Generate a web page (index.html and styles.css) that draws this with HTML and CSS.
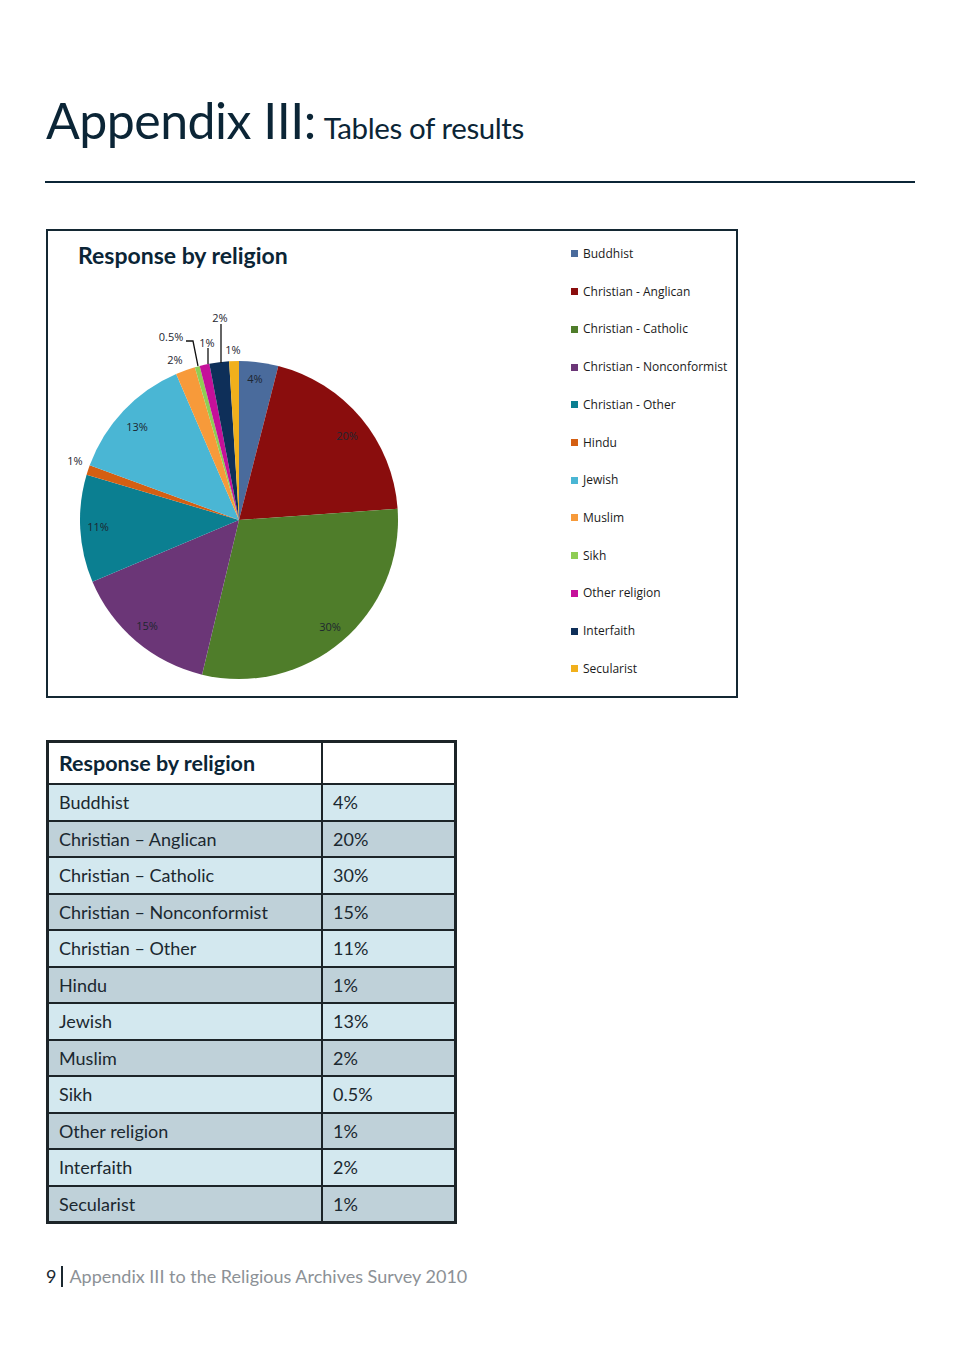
FILE: index.html
```html
<!DOCTYPE html>
<html lang="en">
<head>
<meta charset="utf-8">
<title>Appendix III: Tables of results</title>
<link rel="stylesheet" href="styles.css">
</head>
<body>
<div class="page">
  <header class="page-header">
    <h1 class="title"><span class="title-main">Appendix III:</span> <span class="title-sub">Tables of results</span></h1>
  </header>

  <section class="chart">
    <div class="chart-left">
      <h2 class="chart-title">Response by religion</h2>
      <svg class="pie" width="475" height="426" viewBox="0 0 475 426" xmlns="http://www.w3.org/2000/svg">
        <g class="slices">
          <path fill="#4a6b9c" d="M191 251 L191 92 A159 159 0 0 1 230.35 96.94 Z"/>
          <path fill="#8a0d0d" d="M191 251 L230.35 96.94 A159 159 0 0 1 349.61 239.83 Z"/>
          <path fill="#4f7d2a" d="M191 251 L349.61 239.83 A159 159 0 0 1 154.06 405.65 Z"/>
          <path fill="#6b3677" d="M191 251 L154.06 405.65 A159 159 0 0 1 44.46 312.71 Z"/>
          <path fill="#0b7f91" d="M191 251 L44.46 312.71 A159 159 0 0 1 38.60 205.66 Z"/>
          <path fill="#d45f12" d="M191 251 L38.60 205.66 A159 159 0 0 1 41.73 196.23 Z"/>
          <path fill="#4ab6d4" d="M191 251 L41.73 196.23 A159 159 0 0 1 128.15 104.95 Z"/>
          <path fill="#f79a3a" d="M191 251 L128.15 104.95 A159 159 0 0 1 146.86 98.25 Z"/>
          <path fill="#8fcd54" d="M191 251 L146.86 98.25 A159 159 0 0 1 151.65 96.95 Z"/>
          <path fill="#c5109a" d="M191 251 L151.65 96.95 A159 159 0 0 1 161.35 94.79 Z"/>
          <path fill="#0e2f59" d="M191 251 L161.35 94.79 A159 159 0 0 1 181.07 92.31 Z"/>
          <path fill="#f1b01c" d="M191 251 L181.07 92.31 A159 159 0 0 1 191 92 Z"/>
        </g>
        <g class="leaders" fill="none" stroke="#111" stroke-width="1.3">
          <polyline points="138,72 145,72 150,97"/>
          <line x1="160" y1="79" x2="160" y2="95"/>
          <line x1="173" y1="55" x2="173" y2="94"/>
        </g>
        <g class="labels">
          <text x="207" y="114">4%</text>
          <text x="299" y="171">20%</text>
          <text x="282" y="362">30%</text>
          <text x="99" y="361">15%</text>
          <text x="50" y="262">11%</text>
          <text x="27" y="196">1%</text>
          <text x="89" y="162">13%</text>
          <text x="127" y="95">2%</text>
          <text x="123" y="72">0.5%</text>
          <text x="159" y="78">1%</text>
          <text x="172" y="53">2%</text>
          <text x="185" y="85">1%</text>
        </g>
      </svg>
    </div>
    <ul class="legend">
      <li><span class="swatch" style="background:#4a6b9c"></span>Buddhist</li>
      <li><span class="swatch" style="background:#8a0d0d"></span>Christian - Anglican</li>
      <li><span class="swatch" style="background:#4f7d2a"></span>Christian - Catholic</li>
      <li><span class="swatch" style="background:#6b3677"></span>Christian - Nonconformist</li>
      <li><span class="swatch" style="background:#0b7f91"></span>Christian - Other</li>
      <li><span class="swatch" style="background:#d45f12"></span>Hindu</li>
      <li><span class="swatch" style="background:#4ab6d4"></span>Jewish</li>
      <li><span class="swatch" style="background:#f79a3a"></span>Muslim</li>
      <li><span class="swatch" style="background:#8fcd54"></span>Sikh</li>
      <li><span class="swatch" style="background:#c5109a"></span>Other religion</li>
      <li><span class="swatch" style="background:#0e2f59"></span>Interfaith</li>
      <li><span class="swatch" style="background:#f1b01c"></span>Secularist</li>
    </ul>
  </section>

  <table class="results">
    <thead>
      <tr><th>Response by religion</th><th></th></tr>
    </thead>
    <tbody>
      <tr class="light"><td>Buddhist</td><td>4%</td></tr>
      <tr class="dark"><td>Christian – Anglican</td><td>20%</td></tr>
      <tr class="light"><td>Christian – Catholic</td><td>30%</td></tr>
      <tr class="dark"><td>Christian – Nonconformist</td><td>15%</td></tr>
      <tr class="light"><td>Christian – Other</td><td>11%</td></tr>
      <tr class="dark"><td>Hindu</td><td>1%</td></tr>
      <tr class="light"><td>Jewish</td><td>13%</td></tr>
      <tr class="dark"><td>Muslim</td><td>2%</td></tr>
      <tr class="light"><td>Sikh</td><td>0.5%</td></tr>
      <tr class="dark"><td>Other religion</td><td>1%</td></tr>
      <tr class="light"><td>Interfaith</td><td>2%</td></tr>
      <tr class="dark"><td>Secularist</td><td>1%</td></tr>
    </tbody>
  </table>

  <footer class="page-footer">
    <span class="page-num">9</span><span class="bar"></span><span class="footer-text">Appendix III to the Religious Archives Survey 2010</span>
  </footer>
</div>
</body>
</html>
```

FILE: styles.css
```css
html, body {
  margin: 0;
  padding: 0;
  background: #ffffff;
}

body {
  font-family: Lato, "Open Sans", "Liberation Sans", sans-serif;
  color: #1b2a33;
}

.page {
  width: 960px;
  padding-left: 45px;
  box-sizing: border-box;
}

.page-header {
  width: 870px;
  padding-top: 91px;
  padding-bottom: 24px;
  border-bottom: 2px solid #0b2536;
}

.title {
  margin: 0;
  font-weight: 400;
  font-size: 50px;
  line-height: 58px;
  color: #0b2536;
  white-space: nowrap;
}

.title-main {
  font-size: 50px;
  letter-spacing: -0.5px;
  margin-left: 1px;
}

.title-sub {
  font-size: 29.5px;
  letter-spacing: -0.4px;
  margin-left: -5px;
}

/* Chart */
.chart {
  margin-top: 46px;
  margin-left: 1px;
  width: 688px;
  height: 465px;
  border: 2px solid #142833;
  display: flex;
}

.chart-left {
  width: 523px;
  flex: none;
}

.chart-title {
  margin: 0;
  padding: 10px 0 0 30px;
  font-size: 23px;
  line-height: 28px;
  font-weight: 700;
  color: #0b2536;
}

.pie {
  display: block;
}

.pie .labels text {
  font-family: "Open Sans", "Liberation Sans", sans-serif;
  font-size: 11px;
  fill: #1d2630;
  text-anchor: middle;
}

.legend {
  list-style: none;
  margin: 0;
  padding: 4px 0 0 0;
  font-family: "Open Sans", "Liberation Sans", sans-serif;
  font-size: 12px;
  color: #1a1a1a;
}

.legend li {
  height: 37.73px;
  line-height: 37.73px;
  display: flex;
  align-items: center;
  white-space: nowrap;
}

.swatch {
  width: 7px;
  height: 7px;
  margin-right: 5px;
  flex: none;
}

/* Table */
.results {
  margin-top: 42px;
  margin-left: 1px;
  border-collapse: collapse;
  border: 3px solid #1c2428;
  width: 411px;
}

.results th,
.results td {
  border: 2.5px solid #1c2428;
  text-align: left;
  padding: 0 0 0 10px;
  vertical-align: middle;
  white-space: nowrap;
}

.results th {
  height: 40px;
  font-size: 21.5px;
  font-weight: 700;
  color: #0b2536;
  background: #ffffff;
}

.results th:first-child,
.results td:first-child {
  width: 262px;
}

.results td {
  height: 34.5px;
  font-size: 18px;
  color: #1b2830;
}

.results tr.light td {
  background: #d3e8ef;
}

.results tr.dark td {
  background: #bfd1d9;
}

/* Footer */
.page-footer {
  margin-top: 40px;
  display: flex;
  align-items: center;
  height: 24px;
  font-size: 18px;
  margin-left: 1px;
}

.page-num {
  color: #1b2830;
}

.bar {
  width: 2px;
  height: 21px;
  background: #1b2830;
  margin: 0 6px 0 5px;
}

.footer-text {
  color: #8c9196;
}
```
